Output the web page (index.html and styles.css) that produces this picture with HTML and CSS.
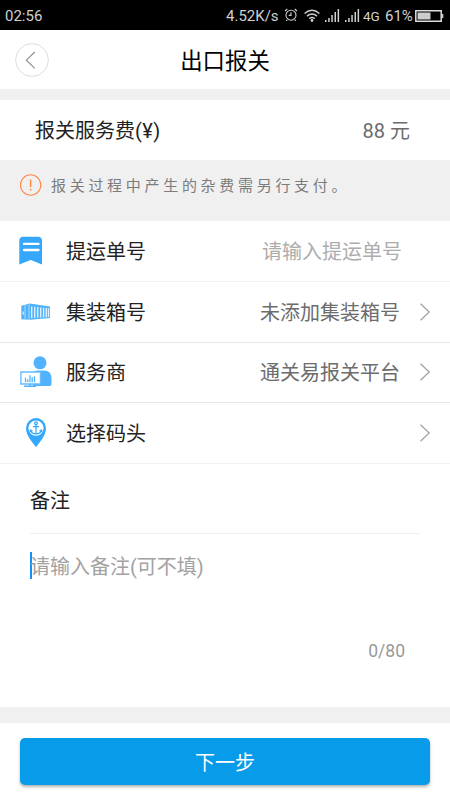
FILE: index.html
```html
<!DOCTYPE html>
<html lang="zh-CN">
<head>
<meta charset="utf-8">
<title>出口报关</title>
<link rel="stylesheet" href="styles.css">
</head>
<body>
<div class="status">
  <span class="clock">02:56</span>
  <span class="speed">4.52K/s</span>
  <svg class="alarm" width="14" height="14" viewBox="0 0 14 14" fill="none" stroke="#ccc" stroke-width="1.1"><circle cx="7" cy="7.2" r="5"/><path d="M7 4.2v3.2H4.7M1 3 3.3 1M13 3 10.7 1M3.3 11.7l-1 1.3M10.7 11.7l1 1.3"/></svg>
  <svg class="wifi" width="16" height="13" viewBox="0 0 16 13" fill="none" stroke="#d0d0d0" stroke-width="1.4"><path d="M.6 4.5Q8-1.8 15.4 4.5M3 7.1q5-4.2 10 0M5.3 9.6q2.7-2.2 5.4 0"/><circle cx="8" cy="11.5" r=".7" fill="#d0d0d0"/></svg>
  <svg class="signal" width="15" height="13" viewBox="0 0 15 13" fill="#d0d0d0"><path d="M0 11h1.5v2H0zM3.2 9h1.5v4h-1.5zM6.3 6h1.5v7h-1.5zM9.5 3h1.5v10h-1.5zM12.6 0h1.5v13h-1.5z"/></svg>
  <svg class="signal second" width="15" height="13" viewBox="0 0 15 13" fill="#d0d0d0"><path d="M0 11h1.5v2H0zM3.2 9h1.5v4h-1.5zM6.3 6h1.5v7h-1.5zM9.5 3h1.5v10h-1.5zM12.6 0h1.5v13h-1.5z"/></svg>
  <span class="net">4G</span>
  <span class="percent">61%</span>
  <svg class="battery" width="29" height="12" viewBox="0 0 29 12"><path d="M.8.8h25.4v10.4H.8z" fill="none" stroke="#ddd" stroke-width="1.5"/><path d="M2.5 2.5h13v7h-13zM27 4h1.3v4h-1.3z" fill="#ccc"/></svg>
</div>
<header class="header">
  <svg class="back" width="34" height="34" viewBox="0 0 34 34" fill="none"><circle cx="17" cy="17" r="16.4" stroke="#dedede"/><path d="M19.8 9 11.3 17.2l8.5 8.2" stroke="#8c8c8c" stroke-width="1.1"/></svg>
  <h1 class="title">出口报关</h1>
</header>
<section class="fee"><span>报关服务费<span class="unit">(¥)</span></span><span class="value">88 元</span></section>
<div class="notice">
  <svg width="22" height="22" viewBox="0 0 22 22" fill="none" stroke="#ff8748"><circle cx="10.6" cy="11" r="10.2" stroke-width="1.1"/><path d="M10.6 5.5v7.5M10.6 14.7v1.8" stroke-width="1.5"/></svg>
  <span class="notice-text">报关过程中产生的杂费需另行支付。</span>
</div>
<main class="list">
  <div class="row faint">
    <svg class="icon" width="34" height="34" viewBox="0 0 34 34"><path d="M3.3 30.5V6.7q0-4 4-4H22q4 0 4 4v23.8L14.7 26z" fill="#35a8fc"/><path d="M8 9.9h14.5M8 16h14.5" stroke="#fff" stroke-width="2.3" stroke-linecap="round"/></svg>
    <span class="label">提运单号</span><span class="value placeholder">请输入提运单号</span>
  </div>
  <div class="row">
    <svg class="icon" width="34" height="34" viewBox="0 0 34 34"><path d="m5.3 10.8 8.5-2.2L34 11.5v11.6L14 24.7l-8.7-.5z" fill="#4fb2fb"/><path d="M9 10.3v13.6M13 9.5v15" stroke="#bfe3ff" stroke-width=".8"/><path d="M15.7 11.5V23M18.7 11.7v11.2M21.7 12.1v10.6M24.7 12.5v10M27.6 12.7v9.7M30.3 12.9v9.3M32.5 13.2V22" stroke="#d9efff" stroke-width="1.4"/><path d="M7.2 16.5v3" stroke="#fff"/></svg>
    <span class="label">集装箱号</span><span class="value">未添加集装箱号</span>
    <svg class="arrow" width="12" height="20" viewBox="0 0 12 20"><path d="m1.5 1.8 8.7 8.2-8.7 8.2"/></svg>
  </div>
  <div class="row">
    <svg class="icon" width="36" height="34" viewBox="-1 0 36 34"><circle cx="23" cy="7.8" r="6.5" fill="#51b3ff"/><path d="M15.8 31V20q0-4.5 5-4.5h6q7.7 0 7.7 8V29q0 2-3 2z" fill="#51b3ff"/><path d="M3.9 17h19.6v12H3.9z" fill="#fff" stroke="#64bcff" stroke-width="1.4"/><path d="M7 31.2h12M13 29v2" stroke="#51b3ff" stroke-width="1.5"/><path d="M8.5 27.3v-4.5M10.8 27.3v-3M13 27.3v-7M15.2 27.3v-5M17.5 27.3v-6" stroke="#51b3ff" stroke-width="1.3"/></svg>
    <span class="label after-wide">服务商</span><span class="value">通关易报关平台</span>
    <svg class="arrow" width="12" height="20" viewBox="0 0 12 20"><path d="m1.5 1.8 8.7 8.2-8.7 8.2"/></svg>
  </div>
  <div class="row faint">
    <svg class="icon" width="34" height="34" viewBox="0 0 34 34"><path d="M20 31.2C16.6 25.9 10 19.9 10 12.2a10 10.3 0 0 1 20 0c0 7.7-6.6 13.7-10 19z" fill="#35a8fc"/><circle cx="20" cy="12.1" r="7.6" fill="#fff"/><g fill="none" stroke="#35a8fc" stroke-width="1.2"><circle cx="20" cy="7.2" r="1.4"/><path d="M20 8.6v9M17 10.6h6M14.5 14.5q1 3.2 5.5 3.4 4.5-.2 5.5-3.4M14 16l.5-2 2 1.2M26 16l-.5-2-2 1.2"/></g></svg>
    <span class="label">选择码头</span><span class="value"></span>
    <svg class="arrow" width="12" height="20" viewBox="0 0 12 20"><path d="m1.5 1.8 8.7 8.2-8.7 8.2"/></svg>
  </div>
</main>
<section class="remark">
  <h2 class="remark-title">备注</h2>
  <div class="field"><span class="caret"></span><span class="hint">请输入备注(可不填)</span></div>
  <div class="count">0/80</div>
</section>
<footer class="footer"><button class="next">下一步</button></footer>
</body>
</html>
```
FILE: styles.css
```css
* { box-sizing: border-box; }
body {
  margin: 0;
  width: 450px;
  height: 800px;
  overflow: hidden;
  display: flex;
  flex-direction: column;
  background: #f0f0f0;
  color: #222;
  font: 20px/30px Roboto, "Noto Sans CJK SC", sans-serif;
}
svg { flex: none; display: block; }
.status {
  height: 30px;
  padding: 2px 5px 0;
  display: flex;
  align-items: center;
  background: #000;
  color: #d0d0d0;
  font-size: 15px;
  line-height: 30px;
}
.clock { width: 221px; }
.speed { width: 58px; }
.alarm { margin-bottom: 2px; }
.wifi { margin-left: 6px; margin-bottom: 1px; }
.signal { margin-left: 5px; margin-bottom: 1px; }
.net { width: 22px; margin-left: 3px; font-size: 13.5px; }
.percent { width: 29px; font-size: 15px; }
.battery { margin-left: 1px; margin-bottom: 1px; }
.header {
  height: 59px;
  padding: 1px 15px 0;
  display: grid;
  grid-template-columns: 34px 1fr 34px;
  align-items: center;
  background: #fff;
}
.title {
  margin: 0;
  padding-top: 2px;
  text-align: center;
  font-size: 22.4px;
  font-weight: 400;
  color: #000;
}
.fee {
  height: 60px;
  margin-top: 11px;
  padding: 2px 40px 0 35px;
  display: flex;
  align-items: center;
  justify-content: space-between;
  background: #fff;
}
.unit { letter-spacing: .4px; }
.value { color: #6c6c6c; }
.notice {
  height: 61px;
  padding: 14px 19px 0 20px;
  display: flex;
  gap: 9px;
  color: #7c7c7c;
  font-size: 15px;
  line-height: 22px;
  letter-spacing: 3.7px;
}
.notice-text { padding-top: 1px; }
.list { background: #fff; }
.row {
  height: 60.75px;
  padding: 0 19px 0 16px;
  display: flex;
  align-items: center;
  border-bottom: 1px solid #e8e8e8;
}
.row.faint { border-bottom-color: #f2f2f2; }
.label { margin-left: 16px; padding-top: 2px; }
.label.after-wide { margin-left: 14px; }
.row .value { margin-left: auto; padding-top: 2px; }
.row .placeholder { margin-right: 29px; color: #acacac; }
.arrow {
  margin-left: 19px;
  fill: none;
  stroke: #a0a0a0;
  stroke-width: 1.2;
}
.remark {
  height: 243px;
  padding: 0 30px;
  background: #fff;
}
.remark-title {
  height: 70px;
  margin: 0;
  padding-top: 22px;
  font-size: 20px;
  font-weight: 400;
  border-bottom: 1px solid #f0f0f0;
}
.field {
  height: 63px;
  display: flex;
  align-items: center;
  color: #a2a2a2;
}
.hint { padding-top: 2px; }
.caret { width: 2px; height: 27px; margin-right: -2px; background: #1590f5; }
.count {
  margin-top: 39px;
  padding-right: 15px;
  text-align: right;
  font-size: 17.5px;
  color: #999;
}
.footer {
  flex: 1;
  margin-top: 16px;
  padding: 15px 20px 0;
  background: #fff;
}
.next {
  width: 100%;
  height: 47px;
  padding: 2px 0 0;
  border: 0;
  border-radius: 5px;
  background: #089be9;
  box-shadow: 0 2px 3px rgba(0, 0, 0, .3);
  color: #fff;
  font: inherit;
}
```
